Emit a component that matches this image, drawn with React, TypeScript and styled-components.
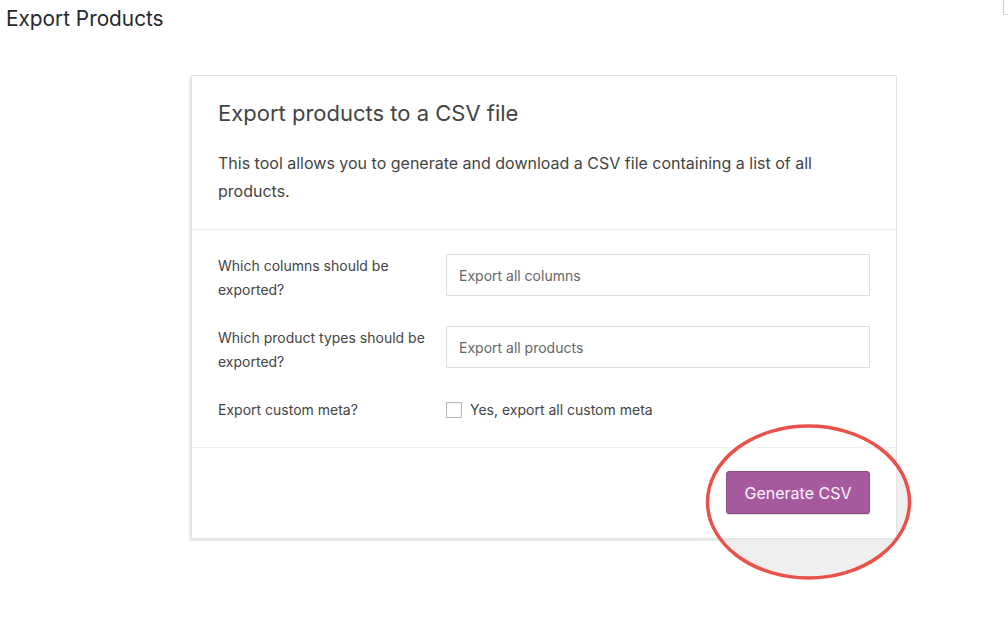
import React from "react";
import styled, { createGlobalStyle } from "styled-components";

const Global = createGlobalStyle`
  html, body { margin: 0; padding: 0; background: #fff; }
  body { font-family: Inter, "Noto Sans", "Liberation Sans", sans-serif; color: #444; }
  * { box-sizing: border-box; }
`;

const Page = styled.div`
  position: relative;
  width: 1008px;
  height: 619px;
  overflow: hidden;
  background: #fff;
`;

const PageTitle = styled.h1`
  margin: 0;
  padding: 6px 0 0 6px;
  font-size: 20.8px;
  line-height: 26px;
  font-weight: 400;
  color: #23282d;
`;

const Content = styled.div`
  display: flex;
  padding: 43px 0 0 191px;
`;

const Card = styled.div`
  position: relative;
  z-index: 1;
  width: 706px;
  background: #fff;
  border: 1px solid #e3e3e3;
  box-shadow: -2px 2px 0 #ececec, 0 2px 1px rgba(0,0,0,0.04);
`;

const Header = styled.header`
  padding: 21px 26px 24px;
  border-bottom: 1px solid #eee;
`;

const CardTitle = styled.h2`
  margin: 0 0 20px;
  font-size: 22px;
  line-height: 32px;
  font-weight: 400;
  color: #444;
`;

const Intro = styled.p`
  margin: 0;
  font-size: 16px;
  line-height: 28px;
  color: #444;
`;

const Form = styled.section`
  display: grid;
  grid-template-columns: 228px 1fr;
  row-gap: 24px;
  padding: 24px 26px 25px;
  border-bottom: 1px solid #eee;
`;

const Label = styled.label<{ $center?: boolean }>`
  font-size: 14px;
  line-height: 24px;
  color: #444;
  padding-right: 20px;
  align-self: ${(p) => (p.$center ? "center" : "start")};
`;

const Field = styled.div`
  height: 42px;
  border: 1px solid #ddd;
  display: flex;
  align-items: center;
  padding: 0 12px;
  font-size: 14px;
  color: #666;
`;

const CheckRow = styled.label`
  display: flex;
  align-items: center;
  gap: 8px;
  font-size: 14px;
  line-height: 24px;
  color: #444;
`;

const Box = styled.span`
  width: 16px;
  height: 16px;
  border: 1px solid #b4b9be;
  background: #fff;
  box-shadow: inset 0 1px 2px rgba(0,0,0,0.05);
`;

const Footer = styled.footer`
  display: flex;
  justify-content: flex-end;
  padding: 23px 26px 24px;
`;

const Button = styled.button`
  height: 43px;
  width: 144px;
  background: #a55a9f;
  border: 1px solid #8f4a88;
  border-radius: 3px;
  color: #fdf2fb;
  font-family: inherit;
  font-size: 16px;
  box-shadow: 0 1px 0 rgba(0,0,0,0.15);
`;

const Spot = styled.svg<{ $front?: boolean }>`
  position: absolute;
  left: 700px;
  top: 420px;
  z-index: ${(p) => (p.$front ? 2 : 0)};
  pointer-events: none;
`;

const Corner = styled.div`
  position: absolute;
  top: 0;
  right: 0;
  width: 5px;
  height: 15px;
  border-left: 1px solid #ccc;
  border-bottom: 1px solid #ddd;
`;

export default function App() {
  return (
    <Page>
      <Global />
      <PageTitle>Export Products</PageTitle>
      <Spot width="220" height="170">
        <ellipse cx="108.5" cy="82" rx="101" ry="76" fill="#efefef" />
      </Spot>
      <Content>
        <Card>
          <Header>
            <CardTitle>Export products to a CSV file</CardTitle>
            <Intro>
              This tool allows you to generate and download a CSV file containing a list of all products.
            </Intro>
          </Header>
          <Form>
            <Label>Which columns should be exported?</Label>
            <Field>Export all columns</Field>
            <Label>Which product types should be exported?</Label>
            <Field>Export all products</Field>
            <Label $center>Export custom meta?</Label>
            <CheckRow>
              <Box />
              Yes, export all custom meta
            </CheckRow>
          </Form>
          <Footer>
            <Button>Generate CSV</Button>
          </Footer>
        </Card>
      </Content>
      <Spot $front width="220" height="170">
        <ellipse cx="108.5" cy="82" rx="101" ry="76" fill="none" stroke="#e9524a" strokeWidth="3.5" />
      </Spot>
      <Corner />
    </Page>
  );
}
